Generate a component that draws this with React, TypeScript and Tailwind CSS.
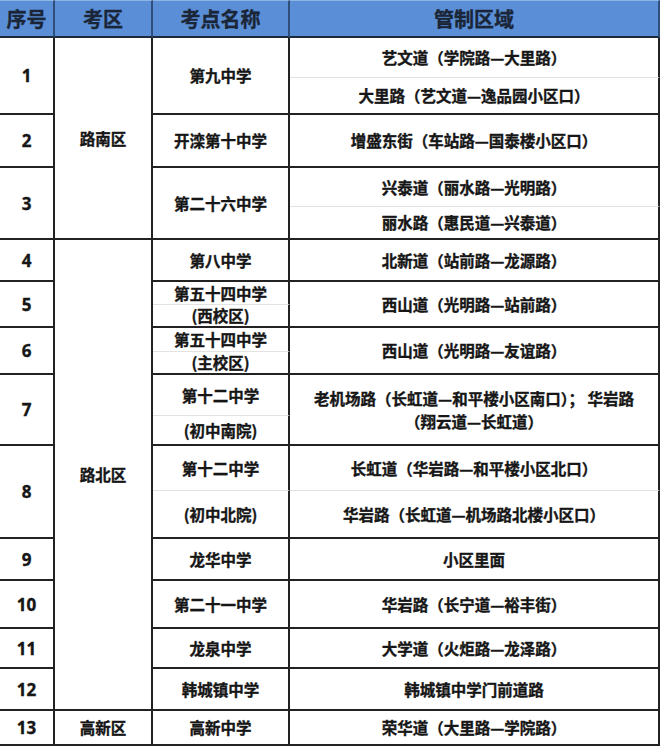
import React from "react";

type Cell = { col: number; r0: number; r1: number; text: React.ReactNode; light?: boolean };

const colStart = ["", "col-start-1", "col-start-2", "col-start-3", "col-start-4"];
const rowStart = [
  "", "row-start-1", "row-start-2", "row-start-3", "row-start-4", "row-start-5", "row-start-6", "row-start-7",
  "row-start-8", "row-start-9", "row-start-10", "row-start-11", "row-start-12", "row-start-13", "row-start-14",
  "row-start-15", "row-start-16", "row-start-17", "row-start-18", "row-start-19", "row-start-20", "row-start-21",
];
const rowEnd = [
  "", "row-end-1", "row-end-2", "row-end-3", "row-end-4", "row-end-5", "row-end-6", "row-end-7",
  "row-end-8", "row-end-9", "row-end-10", "row-end-11", "row-end-12", "row-end-13", "row-end-14",
  "row-end-15", "row-end-16", "row-end-17", "row-end-18", "row-end-19", "row-end-20", "row-end-21",
];

const cells: Cell[] = [
  // 序号
  { col: 1, r0: 2, r1: 4, text: "1" },
  { col: 1, r0: 4, r1: 5, text: "2" },
  { col: 1, r0: 5, r1: 7, text: "3" },
  { col: 1, r0: 7, r1: 8, text: "4" },
  { col: 1, r0: 8, r1: 10, text: "5" },
  { col: 1, r0: 10, r1: 12, text: "6" },
  { col: 1, r0: 12, r1: 14, text: "7" },
  { col: 1, r0: 14, r1: 16, text: "8" },
  { col: 1, r0: 16, r1: 17, text: "9" },
  { col: 1, r0: 17, r1: 18, text: "10" },
  { col: 1, r0: 18, r1: 19, text: "11" },
  { col: 1, r0: 19, r1: 20, text: "12" },
  { col: 1, r0: 20, r1: 21, text: "13" },
  // 考区
  { col: 2, r0: 2, r1: 7, text: "路南区" },
  { col: 2, r0: 7, r1: 20, text: "路北区" },
  { col: 2, r0: 20, r1: 21, text: "高新区" },
  // 考点名称
  { col: 3, r0: 2, r1: 4, text: "第九中学" },
  { col: 3, r0: 4, r1: 5, text: "开滦第十中学" },
  { col: 3, r0: 5, r1: 7, text: "第二十六中学" },
  { col: 3, r0: 7, r1: 8, text: "第八中学" },
  { col: 3, r0: 8, r1: 9, text: "第五十四中学", light: true },
  { col: 3, r0: 9, r1: 10, text: "(西校区)" },
  { col: 3, r0: 10, r1: 11, text: "第五十四中学", light: true },
  { col: 3, r0: 11, r1: 12, text: "(主校区)" },
  { col: 3, r0: 12, r1: 13, text: "第十二中学", light: true },
  { col: 3, r0: 13, r1: 14, text: "(初中南院)" },
  { col: 3, r0: 14, r1: 15, text: "第十二中学", light: true },
  { col: 3, r0: 15, r1: 16, text: "(初中北院)" },
  { col: 3, r0: 16, r1: 17, text: "龙华中学" },
  { col: 3, r0: 17, r1: 18, text: "第二十一中学" },
  { col: 3, r0: 18, r1: 19, text: "龙泉中学" },
  { col: 3, r0: 19, r1: 20, text: "韩城镇中学" },
  { col: 3, r0: 20, r1: 21, text: "高新中学" },
  // 管制区域
  { col: 4, r0: 2, r1: 3, text: "艺文道（学院路—大里路）", light: true },
  { col: 4, r0: 3, r1: 4, text: "大里路（艺文道—逸品园小区口）" },
  { col: 4, r0: 4, r1: 5, text: "增盛东街（车站路—国泰楼小区口）" },
  { col: 4, r0: 5, r1: 6, text: "兴泰道（丽水路—光明路）", light: true },
  { col: 4, r0: 6, r1: 7, text: "丽水路（惠民道—兴泰道）" },
  { col: 4, r0: 7, r1: 8, text: "北新道（站前路—龙源路）" },
  { col: 4, r0: 8, r1: 10, text: "西山道（光明路—站前路）" },
  { col: 4, r0: 10, r1: 12, text: "西山道（光明路—友谊路）" },
  {
    col: 4,
    r0: 12,
    r1: 14,
    text: (
      <>
        老机场路（长虹道—和平楼小区南口）； 华岩路
        <br />
        （翔云道—长虹道）
      </>
    ),
  },
  { col: 4, r0: 14, r1: 15, text: "长虹道（华岩路—和平楼小区北口）", light: true },
  { col: 4, r0: 15, r1: 16, text: "华岩路（长虹道—机场路北楼小区口）" },
  { col: 4, r0: 16, r1: 17, text: "小区里面" },
  { col: 4, r0: 17, r1: 18, text: "华岩路（长宁道—裕丰街）" },
  { col: 4, r0: 18, r1: 19, text: "大学道（火炬路—龙泽路）" },
  { col: 4, r0: 19, r1: 20, text: "韩城镇中学门前道路" },
  { col: 4, r0: 20, r1: 21, text: "荣华道（大里路—学院路）" },
];

const headers = ["序号", "考区", "考点名称", "管制区域"];

export default function App() {
  return (
    <div className="w-[660px] h-[748px] bg-white font-['Noto_Sans_CJK_SC','Noto_Sans',sans-serif] font-bold text-[#161616] [-webkit-text-stroke:0.35px_currentColor]">
      <div className="grid grid-cols-[55px_98px_137px_370px] grid-rows-[38px_40px_37px_53px_39px_33px_42px_23px_23px_24px_23px_41px_30px_45px_48px_42px_48px_40px_42px_35px]">
        {headers.map((h, i) => (
          <div
            key={h}
            className={`${colStart[i + 1]} row-start-1 row-end-2 flex items-center justify-center bg-[#5a8fd7] border-t border-t-[#8fb4e6] border-b-2 border-b-[#1d2a3a] border-r-2 border-r-[#2f4f7a] text-[20px] leading-none text-[#1a2638]`}
          >
            {h}
          </div>
        ))}
        {cells.map((c, i) => (
          <div
            key={i}
            className={`${colStart[c.col]} ${rowStart[c.r0]} ${rowEnd[c.r1]} flex items-center justify-center text-center border-r-2 border-r-[#222] ${
              c.light ? "border-b border-b-[#e2e2e2]" : "border-b-2 border-b-[#222]"
            } ${c.col === 1 ? "text-[17px] font-['Open_Sans',sans-serif]" : "text-[15.5px]"} leading-[23px]`}
          >
            <span>{c.text}</span>
          </div>
        ))}
      </div>
    </div>
  );
}
